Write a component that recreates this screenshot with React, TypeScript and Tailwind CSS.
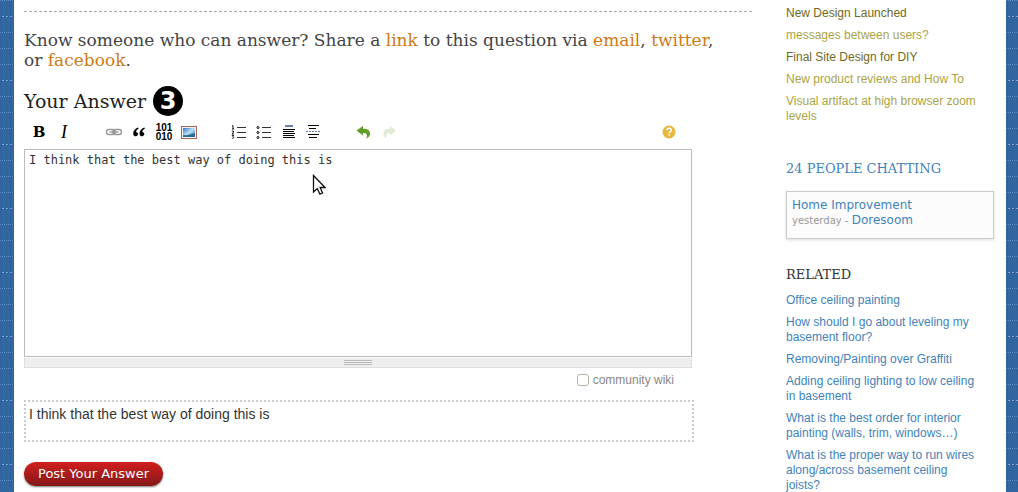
import type { ReactNode } from "react";

const slab = "font-['DejaVu_Serif',serif]";

const chatter = [
  { text: "New Design Launched", visited: true },
  { text: "messages between users?", visited: false },
  { text: "Final Site Design for DIY", visited: true },
  { text: "New product reviews and How To", visited: false },
  { text: "Visual artifact at high browser zoom levels", visited: false },
];

const related = [
  "Office ceiling painting",
  "How should I go about leveling my basement floor?",
  "Removing/Painting over Graffiti",
  "Adding ceiling lighting to low ceiling in basement",
  "What is the best order for interior painting (walls, trim, windows…)",
  "What is the proper way to run wires along/across basement ceiling joists?",
];

function Denim({ id }: { id: string }) {
  return (
    <svg className="absolute inset-0 h-full w-full" aria-hidden="true">
      <defs>
        <pattern id={id} width="12" height="64" patternUnits="userSpaceOnUse">
          <rect width="12" height="64" fill="#3166a1" />
          <path d="M1.5 0v64M6.5 0v64M10.5 0v64" stroke="#2e629c" strokeDasharray="3 1" />
          <path d="M3.5 0v64M8.5 0v64" stroke="#356aa5" strokeDasharray="1 2" />
          <path d="M2 16.5h2M6 16.5h2M10 16.5h2" stroke="#7fa6d1" />
          <path d="M0 32.5h12M0 48.5h12M0 .5h12" stroke="#5c8cc0" strokeDasharray="1 1" />
        </pattern>
      </defs>
      <rect width="100%" height="100%" fill={`url(#${id})`} />
    </svg>
  );
}

function Tool({ label, children }: { label: string; children: ReactNode }) {
  return (
    <button type="button" aria-label={label} title={label} className="flex h-5 w-5 shrink-0 items-center justify-center">
      {children}
    </button>
  );
}

function Icon({ children }: { children: ReactNode }) {
  return (
    <svg width="20" height="20" viewBox="0 0 20 20" fill="none" aria-hidden="true">
      {children}
    </svg>
  );
}

function Toolbar() {
  return (
    <div role="toolbar" aria-label="Formatting" className="flex items-center gap-[5px] pr-[13px] pl-[5px] text-black">
      <Tool label="Strong">
        <span className="font-['DejaVu_Serif',serif] text-[15px] leading-5 font-bold">B</span>
      </Tool>
      <Tool label="Emphasis">
        <span className="font-['Liberation_Serif',serif] text-[18px] leading-5 italic">I</span>
      </Tool>
      <span className="w-5" />
      <Tool label="Hyperlink">
        <Icon>
          <rect x="2.500" y="7.500" width="8.500" height="5" rx="2.500" stroke="#999" strokeWidth="1.400" />
          <rect x="9" y="7.500" width="8.500" height="5" rx="2.500" stroke="#999" strokeWidth="1.400" />
          <path d="M5.500 10h9" stroke="#888" strokeWidth="1.200" />
        </Icon>
      </Tool>
      <Tool label="Blockquote">
        <Icon>
          <path d="M9 5.600C6 6.800 4.200 9 4.200 11.400c0 1.700 1 2.900 2.500 2.900 1.300 0 2.300-.9 2.300-2.200 0-1.200-.8-2-2-2.100.2-1.400 1.100-2.600 2.700-3.500zM15.300 5.600c-3 1.200-4.800 3.400-4.800 5.800 0 1.700 1 2.900 2.500 2.900 1.300 0 2.300-.9 2.300-2.200 0-1.200-.8-2-2-2.100.2-1.400 1.100-2.600 2.700-3.500z" fill="#000" />
        </Icon>
      </Tool>
      <Tool label="Code sample">
        <span className="font-['Liberation_Sans_Narrow','Liberation_Sans',sans-serif] text-[10px] leading-[9px] font-bold">
          101
          <br />
          010
        </span>
      </Tool>
      <Tool label="Image">
        <Icon>
          <defs>
            <linearGradient id="sky" x1="0" y1="0" x2="1" y2="1">
              <stop offset="0" stopColor="#2f78c8" />
              <stop offset=".5" stopColor="#b9dff2" />
              <stop offset="1" stopColor="#2c6fa8" />
            </linearGradient>
          </defs>
          <rect x="2.500" y="4.500" width="15" height="12" fill="#f4f1ee" stroke="#a5685a" />
          <rect x="4" y="6" width="12" height="9" fill="url(#sky)" />
          <path d="M4 15v-2l3 .3 3-.6 6-1.700v4z" fill="#2d6b96" />
        </Icon>
      </Tool>
      <span className="w-5" />
      <Tool label="Numbered list">
        <Icon>
          <path d="M8 5.500h9M8 10.500h9M8 15.500h9" stroke="#333" />
          <path d="M3 4.200l1-.7v3.500M3 7h2M2.800 9h1.700v1l-1.500 2h2M2.800 13.500h1.900l-.9 1.200c1.300.2 1.200 1.800-.9 1.700" stroke="#000" strokeWidth=".9" />
        </Icon>
      </Tool>
      <Tool label="Bulleted list">
        <Icon>
          <path d="M8 5.500h9M8 10.500h9M8 15.500h9" stroke="#333" />
          <circle cx="4" cy="5.500" r="1" stroke="#000" />
          <circle cx="4" cy="10.500" r="1" stroke="#000" />
          <circle cx="4" cy="15.500" r="1" stroke="#000" />
        </Icon>
      </Tool>
      <Tool label="Heading">
        <Icon>
          <path d="M6 4h8" stroke="#6482b0" strokeWidth="2" />
          <path d="M4 7.500h12M4 9.500h11M4 11.500h12M4 13.500h11M4 15.500h12" stroke="#000" />
        </Icon>
      </Tool>
      <Tool label="Horizontal rule">
        <Icon>
          <path d="M4 3.500h11M5 6.500h7M4 12.500h11M5 15.500h8" stroke="#000" />
          <path d="M2 9.500h15" stroke="#6579ae" strokeDasharray="2 1" />
        </Icon>
      </Tool>
      <span className="w-5" />
      <Tool label="Undo">
        <Icon>
          <path d="M2.500 8.500L9 4v2.800c4.500-.2 7 1.800 7 4.800 0 2.500-1.500 4.300-4.200 5 1.300-1.500 1.600-3 .9-4.200-.6-1-1.800-1.500-3.700-1.400v2.500z" fill="#5f9c29" />
        </Icon>
      </Tool>
      <Tool label="Redo">
        <Icon>
          <path d="M17 8.500L11 4v2.800c-4.500-.2-6.500 1.800-6.500 4.800 0 2.500 1.300 4.300 4 5-1.300-1.500-1.600-3-.9-4.200.6-1 1.500-1.500 3.400-1.400v2.500z" fill="#dfe9d5" />
        </Icon>
      </Tool>
      <span className="ml-auto">
        <Tool label="Editing help">
          <Icon>
            <circle cx="10" cy="10" r="6.500" fill="#e6b93e" />
            <path d="M7.800 8.300c0-2.800 4.500-2.600 4.500-.1 0 1.500-2 1.500-2.100 3M10.200 12.200v1.600" stroke="#fff" strokeWidth="1.600" />
          </Icon>
        </Tool>
      </span>
    </div>
  );
}

function Orange({ children }: { children: ReactNode }) {
  return (
    <a href="#share" className="text-[#cf7a16]">
      {children}
    </a>
  );
}

function AnswerForm() {
  return (
    <main className="min-w-0 max-w-[728px] flex-1 pt-[11px]">
      <p className={`${slab} border-t border-dashed border-[#aaa] pt-[18px] pr-6 text-[17px] leading-5 text-[#444]`}>
        Know someone who can answer? Share a <Orange>link</Orange> to this question via <Orange>email</Orange>,{" "}
        <Orange>twitter</Orange>, or <Orange>facebook</Orange>.
      </p>
      <form className="mt-4" onSubmit={(e) => e.preventDefault()}>
        <h2 className={`${slab} flex h-[30px] items-center gap-[7px] text-[19px] text-[#222]`}>
          <label htmlFor="answer">Your Answer</label>
          <span className="flex h-[30px] w-[30px] items-center justify-center rounded-full bg-black font-['DejaVu_Sans',sans-serif] text-2xl leading-none font-bold text-white">
            3
          </span>
        </h2>
        <div className="mr-[60px] pt-[6px]">
          <Toolbar />
          <div className="relative mt-[7px]">
            <textarea
              id="answer"
              defaultValue="I think that the best way of doing this is"
              className="block h-[208px] w-full resize-none border border-[#bbb] bg-white px-1 py-[2px] font-['DejaVu_Sans_Mono',monospace] text-xs leading-4 text-[#333] outline-none"
            />
            <svg className="absolute top-[25px] left-[288px]" width="14" height="22" viewBox="0 0 14 22" aria-hidden="true">
              <path d="M1.500 1.500v16.500l3.800-3.500 2.600 5.700 2.700-1.200-2.500-5.500h4.900z" fill="#fff" stroke="#111" strokeWidth="1.300" />
            </svg>
          </div>
          <div className="mt-px flex h-[10px] items-center justify-center border border-t-0 border-[#ddd] bg-[#eee]">
            <svg width="28" height="6" viewBox="0 0 28 6" aria-hidden="true">
              <path d="M0 .5h28M0 2.500h28M0 4.500h28" stroke="#bbb" />
            </svg>
          </div>
          <label className="mt-1 mr-[18px] flex h-4 items-center justify-end gap-1 text-xs leading-4 text-[#888]">
            <input type="checkbox" className="h-3 w-3 appearance-none rounded-[3px] border border-[#b5b2a5] bg-white" />
            community wiki
          </label>
        </div>
        <div className="mt-3 mr-[58px] h-[42px] border-2 border-dotted border-[#ccc] px-[3px] py-[3px] text-sm leading-[18px] text-[#333]">
          I think that the best way of doing this is
        </div>
        <button
          type="submit"
          className="mt-5 h-6 rounded-full bg-linear-to-b from-[#d21e1e] to-[#841818] px-[14px] font-['DejaVu_Sans',sans-serif] text-[13px] leading-6 text-white shadow-[0_1px_2px_#777] text-shadow-2xs"
        >
          Post Your Answer
        </button>
      </form>
    </main>
  );
}

function Sidebar() {
  return (
    <aside className="ml-auto w-[208px] shrink-0 pt-[6px] text-xs leading-[15px] text-[#3f83b9]">
      <ul className="flex flex-col gap-[7px] pr-[10px]">
        {chatter.map((item) => (
          <li key={item.text}>
            <a href="#meta" className={item.visited ? "text-[#6e6a22]" : "text-[#aba446]"}>
              {item.text}
            </a>
          </li>
        ))}
      </ul>
      <h3 className={`${slab} mt-[35px] text-[13px] leading-5`}>
        <a href="#chat">24 PEOPLE CHATTING</a>
      </h3>
      <section className="mt-3 h-12 border border-[#ccc] bg-[#fcfcfc] px-[5px] pt-[6px] font-['DejaVu_Sans',sans-serif] shadow-[0_1px_3px_#ddd]">
        <a href="#room" className="block">
          Home Improvement
        </a>
        <p>
          <span className="text-[10px] text-[#999]">yesterday - </span>
          <a href="#user">Doresoom</a>
        </p>
      </section>
      <h3 className={`${slab} mt-[26px] text-[13px] leading-5 text-[#333]`}>RELATED</h3>
      <ul className="mt-2 flex flex-col gap-[7px] pr-[10px]">
        {related.map((title) => (
          <li key={title}>
            <a href="#question">{title}</a>
          </li>
        ))}
      </ul>
    </aside>
  );
}

export default function App() {
  return (
    <div className="flex min-h-screen bg-white font-['Liberation_Sans',Arial,sans-serif]">
      <div className="relative w-[14px] shrink-0">
        <Denim id="denim-left" />
      </div>
      <div className="flex min-w-0 flex-1 gap-8 pr-3 pl-[10px]">
        <AnswerForm />
        <Sidebar />
      </div>
      <div className="relative w-3 shrink-0">
        <Denim id="denim-right" />
      </div>
    </div>
  );
}
